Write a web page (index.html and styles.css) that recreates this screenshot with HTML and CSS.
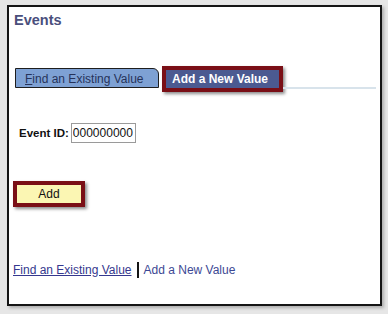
FILE: index.html
```html
<!DOCTYPE html>
<html lang="en">
<head>
	<meta charset="UTF-8">
	<title>Events</title>
	<link rel="stylesheet" href="styles.css">
</head>
<body>

	<!-- PAGE FRAME -->
	<div class="frame">
		<h1 class="title">Events</h1>

		<!-- TABS -->
		<div class="tabs">
			<a class="tab tab-find" href="#"><u>F</u>ind an Existing Value</a>
			<div class="tab tab-add">Add a New Value</div>
			<div class="tab-line"></div>
		</div>

		<!-- SEARCH FORM -->
		<div class="field">
			<label for="eventid">Event ID:</label>
			<input id="eventid" type="text" value="000000000">
		</div>

		<button class="add-btn">Add</button>

		<!-- FOOTER LINKS -->
		<div class="links">
			<a class="link-find" href="#">Find an Existing Value</a>
			<span class="sep"></span>
			<a class="link-add" href="#">Add a New Value</a>
		</div>
	</div>

</body>
</html>
```

FILE: styles.css
```css
* {
	margin: 0;
	padding: 0;
	box-sizing: border-box;
	font-family: 'Liberation Sans', Arial, sans-serif;
}

body {
	background: #e6e6e6;
	padding: 5px 0 0 7px;
	width: 388px;
	height: 314px;
	overflow: hidden;
}

/* FRAME */
.frame {
	width: 375px;
	height: 301px;
	background: #fff;
	border: 2px solid #151515;
	box-shadow: 2px 2px 3px rgba(0, 0, 0, 0.25);
	padding: 4px 4px 0 4px;
}

.title {
	font-size: 14.5px;
	line-height: 18px;
	font-weight: bold;
	color: #4a4f7c;
	padding-left: 1px;
}

/* TABS */
.tabs {
	display: flex;
	align-items: flex-end;
	margin: 37px 0 0 2px;
}

.tab {
	font-size: 12px;
	line-height: 14px;
	white-space: nowrap;
}

.tab-find {
	width: 144px;
	height: 20px;
	padding: 3px 0 0 9px;
	background: #7ea1d4;
	border: 1px solid #1e1e1e;
	border-radius: 0 6px 0 0;
	color: #26335a;
	text-decoration: none;
}

.tab-add {
	width: 121px;
	height: 26px;
	margin: 0 0 -4px 3px;
	padding: 2px 0 0 6px;
	background: #4b5a91;
	border: 4px solid #7a0f16;
	box-shadow: 2px 2px 3px rgba(0, 0, 0, 0.45);
	color: #fff;
	font-weight: bold;
}

.tab-line {
	flex: 1;
	height: 2px;
	margin: 0 0 -1px 0;
	background: #d8e3eb;
}

/* FORM */
.field {
	display: flex;
	align-items: center;
	margin: 35px 0 0 6px;
	font-size: 12px;
}

.field label {
	font-size: 11.5px;
	font-weight: bold;
	color: #111;
	margin-right: 2px;
}

.field input {
	width: 65px;
	height: 20px;
	border: 1px solid #9a9a9a;
	padding: 0 0 0 1px;
	font-size: 12px;
	color: #111;
	background: #fff;
}

.add-btn {
	display: block;
	width: 72px;
	height: 26px;
	margin: 38px 0 0 0;
	background: #fbf6b3;
	border: 4px solid #7a0f16;
	box-shadow: 2px 2px 3px rgba(0, 0, 0, 0.45);
	font-size: 12px;
	color: #111;
}

/* LINKS */
.links {
	display: flex;
	align-items: center;
	margin: 55px 0 0 0;
	font-size: 12px;
	line-height: 15px;
}

.link-find {
	color: #35388e;
	text-decoration: underline;
}

.sep {
	display: inline-block;
	width: 2px;
	height: 16px;
	background: #151515;
	margin: 0 5px;
}

.link-add {
	color: #3c4894;
	text-decoration: none;
}
```
